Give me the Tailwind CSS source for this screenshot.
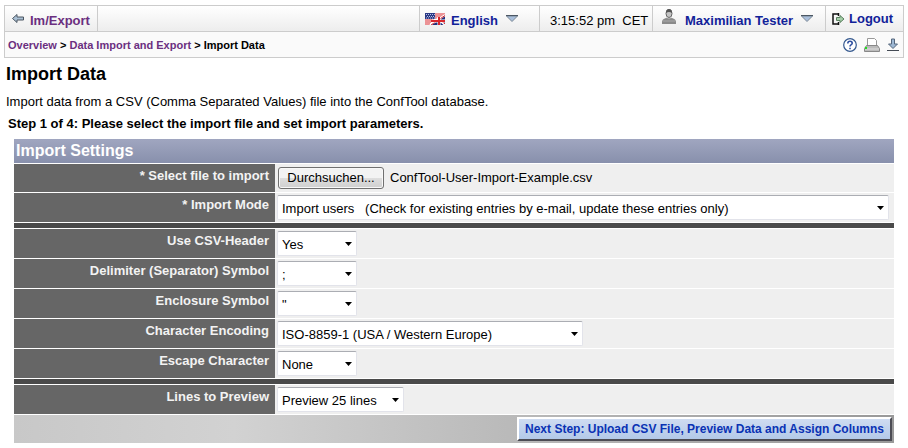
<!DOCTYPE html>
<html lang="en">
<head>
  <meta charset="UTF-8" />
  <meta name="viewport" content="width=device-width, initial-scale=1.0"/>
  <script src="https://cdn.jsdelivr.net/npm/@tailwindcss/browser@4"></script>
  <title>Import Data</title>
</head>
<body class="bg-white px-1 pt-[5px] font-['Liberation_Sans',Arial,sans-serif] text-[13px] leading-4 text-black">
  <!-- Top bar -->
  <header class="border border-[#ccc] bg-[#fafafa]">
    <nav class="flex h-[26px] items-stretch border-b border-[#ccc] bg-linear-to-b from-white to-[#ededed] font-bold text-[#112299]">
      <a href="#" class="flex items-center gap-1.5 border-r border-[#ccc] px-[7px] pt-1 text-[#6b2f80]">
        <svg class="-mt-1 h-3 w-3" viewBox="0 0 12 12"><path d="M.5 5.500 5 1.500v2.500h6.500v3H5v2.500z" fill="#a9bfd3" stroke="#4c5763"/></svg>
        Im/Export
      </a>
      <button class="ml-auto flex w-[120px] items-center border-l border-[#ccc] pl-[5px] pt-1">
        <svg class="-mt-1 mr-1.5 h-3 w-5" viewBox="0 0 20 12">
          <rect width="20" height="12" fill="#fff"/>
          <path d="M10 1h10M10 3h10M9 5h5M0 7h9M0 9h6M0 11h5" stroke="#d8262c"/>
          <rect width="10" height="6" fill="#2b3a86"/>
          <path d="M1 1.500h9M2 3.500h8M1 5h9" stroke="#b9c3e6" stroke-dasharray="1 1"/>
          <path d="M5 12 20 3v9z" fill="#22307c"/>
          <path d="m5 12 15-10M12 5l8 7" stroke="#fff" stroke-width="2"/>
          <path d="m6 12 14-9.500M13 5l7 6" stroke="#d8262c"/>
          <path d="M7 8h13M14 4v8" stroke="#fff" stroke-width="3"/>
          <path d="M6 8h14M14 4v8" stroke="#d8262c" stroke-width="2"/>
        </svg>
        English
        <svg class="-mt-1 ml-2 h-2 w-3" viewBox="0 0 12 8"><path d="M.5 1h11L6 6.500z" fill="#a9bfdc" stroke="#7b8794"/><path d="M0 .5h12" stroke="#4c5763"/></svg>
      </button>
      <div class="flex w-[113px] items-center border-l border-[#ccc] pl-2.5 pt-1 font-normal text-black">3:15:52 pm &nbsp;CET</div>
      <button class="flex w-[173px] items-center border-l border-[#ccc] pl-2 pt-1">
        <svg class="-mt-2 mr-2 h-4 w-4" viewBox="0 0 16 16"><path d="M1 15v-2q0-3 4-4h6q4 1 4 4v2z" fill="#8a8a8a"/><path d="M2 12h12" stroke="#aaa"/><path d="M5.500 9q2.500 2 5 0" fill="#ddd" stroke="#999"/><ellipse cx="8" cy="4.500" rx="3" ry="4" fill="#c4c4c4" stroke="#666"/><path d="M5 4q0-4 3-4t3 4q-3-2-6 0" fill="#555"/></svg>
        Maximilian Tester
        <svg class="-mt-1 ml-2 h-2 w-3" viewBox="0 0 12 8"><path d="M.5 1h11L6 6.500z" fill="#a9bfdc" stroke="#7b8794"/><path d="M0 .5h12" stroke="#4c5763"/></svg>
      </button>
      <a href="#" class="flex w-[78px] items-center gap-1 border-l border-[#ccc] pl-1.5">
        <svg class="h-3 w-[13px]" viewBox="0 0 13 12"><path d="M7 1H1v10h6M6.500 0v3M6.500 9v3" fill="none" stroke="#111" stroke-width="1.500"/><path d="M4.500 4.500H8v-2L12 6 8 9.500v-2H4.500z" fill="#a5cfa9" stroke="#5b8060"/></svg>
        Logout
      </a>
    </nav>
    <div class="flex h-[25px] items-center justify-between pl-[3px] pr-1">
      <div class="text-[11px] font-bold"><a href="#" class="text-[#6b2f80]">Overview</a> &gt; <a href="#" class="text-[#6b2f80]">Data Import and Export</a> &gt; Import Data</div>
      <div class="flex items-center gap-[7px]">
        <a href="#" aria-label="Help">
          <svg class="h-3.5 w-3.5" viewBox="0 0 14 14" fill="none"><circle cx="7" cy="7" r="6.300" fill="#fff" stroke="#34588e" stroke-width="1.200"/><path d="M4.800 5.500q0-2.200 2.200-2.200t2.200 1.900q0 1-1.200 1.700-1 .6-1 1.600M7 9.800v1.500" stroke="#2e4fa0" stroke-width="1.600"/></svg>
        </a>
        <a href="#" aria-label="Print">
          <svg class="h-3.5 w-4" viewBox="0 0 16 14"><path d="M3.500.5h7l2 2V8h-9z" fill="#fff" stroke="#999"/><path d="M2.500 7.500h11l2 3v3H.5v-3z" fill="#bbb" stroke="#888"/><path d="M1 11h14" stroke="#ddd"/><path d="M1 9h2v2H1z" fill="#1fe01f"/></svg>
        </a>
        <a href="#" aria-label="Download">
          <svg class="h-3.5 w-3" viewBox="0 0 12 14"><path d="M4.500 1h3v5h3L6 10.500 1.500 6h3z" fill="#9db7d3" stroke="#55677c"/><path d="M0 12.500h12" stroke="#444b55"/></svg>
        </a>
      </div>
    </div>
  </header>

  <main>
    <h1 class="ml-0.5 mt-1 text-lg font-bold leading-6">Import Data</h1>
    <p class="ml-0.5 mt-2">Import data from a CSV (Comma Separated Values) file into the ConfTool database.</p>
    <p class="ml-1 mt-1.5 font-bold">Step 1 of 4: Please select the import file and set import parameters.</p>

    <!-- Settings form -->
    <form class="mx-2.5 mt-[7px] flex flex-col gap-px">
      <h2 class="h-6 bg-linear-to-b from-[#a0a6c0] to-[#8890ac] pl-0.5 text-base font-bold leading-6 text-white">Import Settings</h2>

      <div class="grid h-7 grid-cols-[261px_1fr] bg-[#efefef]">
        <label for="file" class="bg-[#666] pr-1.5 pt-1 text-right font-bold text-[#f3f3f3]">* Select file to import</label>
        <div class="flex items-center gap-1.5 pl-[3px]">
          <input type="file" id="file" class="hidden" />
          <button type="button" onclick="document.getElementById('file').click()" class="h-[22px] w-[106px] rounded-[3px] border border-[#707070] bg-linear-to-b from-[#f3f3f3] from-50% via-[#dedede] via-50% to-[#cfcfcf] inset-ring inset-ring-[#f8f8f8]">Durchsuchen...</button>
          <span id="fileName">ConfTool-User-Import-Example.csv</span>
        </div>
      </div>

      <div class="grid h-[29px] grid-cols-[261px_1fr] bg-[#efefef]">
        <label for="mode" class="bg-[#666] pr-1.5 pt-1 text-right font-bold text-[#f3f3f3]">* Import Mode</label>
        <div class="relative ml-0.5 mr-[5px] mt-0.5 h-[25px]">
          <select id="mode" class="h-full w-full appearance-none rounded-xs border border-[#e2e3ea] border-t-[#abadb3] bg-white pl-1 pt-0.5">
            <option>Import users &nbsp;&nbsp;(Check for existing entries by e-mail, update these entries only)</option>
          </select>
          <svg class="pointer-events-none absolute right-[5px] top-[11px] h-1 w-[7px]" viewBox="0 0 7 4"><path d="M0 0h7L3.500 4z"/></svg>
        </div>
      </div>

      <div class="h-[5px] bg-[#4a4a4a]"></div>

      <div class="grid h-[29px] grid-cols-[261px_1fr] bg-[#efefef]">
        <label for="header" class="bg-[#666] pr-1.5 pt-1 text-right font-bold text-[#f3f3f3]">Use CSV-Header</label>
        <div class="relative ml-0.5 mt-0.5 h-[25px] w-20">
          <select id="header" class="h-full w-full appearance-none rounded-xs border border-[#e2e3ea] border-t-[#abadb3] bg-white pl-1 pt-0.5"><option>Yes</option><option>No</option></select>
          <svg class="pointer-events-none absolute right-[5px] top-[11px] h-1 w-[7px]" viewBox="0 0 7 4"><path d="M0 0h7L3.500 4z"/></svg>
        </div>
      </div>

      <div class="grid h-[29px] grid-cols-[261px_1fr] bg-[#efefef]">
        <label for="delimiter" class="bg-[#666] pr-1.5 pt-1 text-right font-bold text-[#f3f3f3]">Delimiter (Separator) Symbol</label>
        <div class="relative ml-0.5 mt-0.5 h-[25px] w-20">
          <select id="delimiter" class="h-full w-full appearance-none rounded-xs border border-[#e2e3ea] border-t-[#abadb3] bg-white pl-1 pt-0.5"><option>;</option><option>,</option></select>
          <svg class="pointer-events-none absolute right-[5px] top-[11px] h-1 w-[7px]" viewBox="0 0 7 4"><path d="M0 0h7L3.500 4z"/></svg>
        </div>
      </div>

      <div class="grid h-[29px] grid-cols-[261px_1fr] bg-[#efefef]">
        <label for="enclosure" class="bg-[#666] pr-1.5 pt-1 text-right font-bold text-[#f3f3f3]">Enclosure Symbol</label>
        <div class="relative ml-0.5 mt-0.5 h-[25px] w-20">
          <select id="enclosure" class="h-full w-full appearance-none rounded-xs border border-[#e2e3ea] border-t-[#abadb3] bg-white pl-1 pt-0.5"><option>"</option><option>'</option></select>
          <svg class="pointer-events-none absolute right-[5px] top-[11px] h-1 w-[7px]" viewBox="0 0 7 4"><path d="M0 0h7L3.500 4z"/></svg>
        </div>
      </div>

      <div class="grid h-[29px] grid-cols-[261px_1fr] bg-[#efefef]">
        <label for="encoding" class="bg-[#666] pr-1.5 pt-1 text-right font-bold text-[#f3f3f3]">Character Encoding</label>
        <div class="relative ml-0.5 mt-0.5 h-[25px] w-[306px]">
          <select id="encoding" class="h-full w-full appearance-none rounded-xs border border-[#e2e3ea] border-t-[#abadb3] bg-white pl-1 pt-0.5"><option>ISO-8859-1 (USA / Western Europe)</option><option>UTF-8</option></select>
          <svg class="pointer-events-none absolute right-[5px] top-[11px] h-1 w-[7px]" viewBox="0 0 7 4"><path d="M0 0h7L3.500 4z"/></svg>
        </div>
      </div>

      <div class="grid h-[29px] grid-cols-[261px_1fr] bg-[#efefef]">
        <label for="escape" class="bg-[#666] pr-1.5 pt-1 text-right font-bold text-[#f3f3f3]">Escape Character</label>
        <div class="relative ml-0.5 mt-0.5 h-[25px] w-20">
          <select id="escape" class="h-full w-full appearance-none rounded-xs border border-[#e2e3ea] border-t-[#abadb3] bg-white pl-1 pt-0.5"><option>None</option><option>\</option></select>
          <svg class="pointer-events-none absolute right-[5px] top-[11px] h-1 w-[7px]" viewBox="0 0 7 4"><path d="M0 0h7L3.500 4z"/></svg>
        </div>
      </div>

      <div class="h-[5px] bg-[#4a4a4a]"></div>

      <div class="grid h-[29px] grid-cols-[261px_1fr] bg-[#efefef]">
        <label for="lines" class="bg-[#666] pr-1.5 pt-1 text-right font-bold text-[#f3f3f3]">Lines to Preview</label>
        <div class="relative ml-0.5 mt-0.5 h-[25px] w-[127px]">
          <select id="lines" class="h-full w-full appearance-none rounded-xs border border-[#e2e3ea] border-t-[#abadb3] bg-white pl-1 pt-0.5"><option>Preview 25 lines</option><option>Preview 50 lines</option></select>
          <svg class="pointer-events-none absolute right-[5px] top-[11px] h-1 w-[7px]" viewBox="0 0 7 4"><path d="M0 0h7L3.500 4z"/></svg>
        </div>
      </div>

      <div class="flex h-7 items-center justify-end bg-linear-to-r from-[#c8c8c8] via-[#d2d2d2] via-25% to-[#999] pr-0.5">
        <button type="submit" class="h-6 border-2 border-white border-b-[#4c4c54] border-r-[#4c4c54] bg-linear-to-b from-[#cfdcf1] to-[#b3c9e8] px-1.5 text-xs font-bold text-[#0a32b4]">Next Step: Upload CSV File, Preview Data and Assign Columns</button>
      </div>
    </form>
  </main>

  <script>
    // Show the name of the chosen file
    document.getElementById('file').addEventListener('change', (e) => {
      if (e.target.files.length) {
        document.getElementById('fileName').textContent = e.target.files[0].name;
      }
    });
  </script>
</body>
</html>
